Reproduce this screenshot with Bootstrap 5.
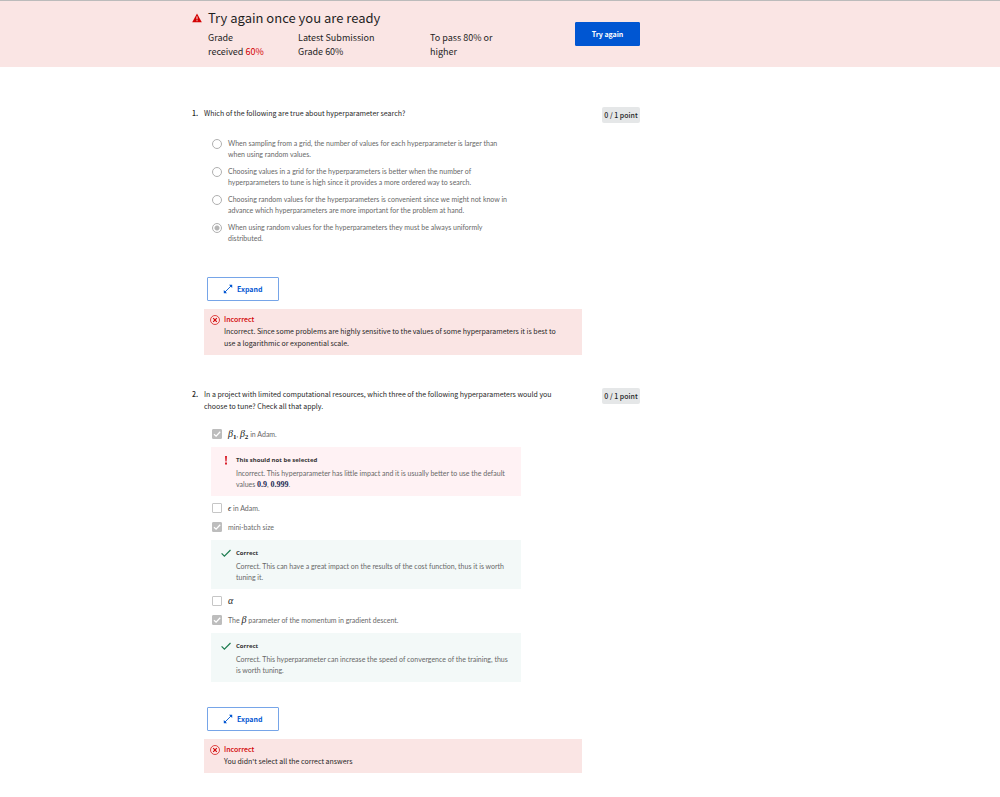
<!DOCTYPE html>
<html lang="en">
<head>
<meta charset="utf-8">
<meta name="viewport" content="width=device-width, initial-scale=1">
<title>Quiz results</title>
<link rel="stylesheet" href="https://cdn.jsdelivr.net/npm/bootstrap@5.3.0/dist/css/bootstrap.min.css">
<style>
  body { font: 7px/12px "Noto Sans CJK SC", "Noto Sans", sans-serif; color: #1f1f1f; background: #fff; }
  .page-col { max-width: 448px; margin-left: 19.2%; }
  .result-banner { background: #fae5e4; border-top: 1px solid #bbb; padding: 8px 0 0; }
  .result-title { font-size: 13px; line-height: 17px; font-weight: 400; margin: 0 0 5px; }
  .result-meta { font-size: 9px; line-height: 14px; padding-bottom: 8px; }
  .result-meta dl { margin: 0; }
  .result-meta dt, .result-meta dd { font-weight: 400; display: inline; margin: 0; }
  .meta-grade { width: 90px; padding-right: 30px; }
  .meta-latest { width: 132px; padding-right: 40px; }
  .meta-pass { width: 80px; }
  .score-fail { color: #d30001; }
  .warn-icon { width: 10px; height: 10px; margin: 4px 6px 0 0; }
  .btn-quiz { --bs-btn-font-size: 7px; --bs-btn-line-height: 12px; --bs-btn-font-weight: 700; --bs-btn-border-radius: 1px; --bs-btn-padding-x: 15px; --bs-btn-padding-y: 5px; }
  .btn-retry { --bs-btn-bg: #0056d2; --bs-btn-border-color: #0056d2; --bs-btn-color: #fff; margin-top: 13px; min-width: 65px; }
  .btn-expand { --bs-btn-color: #0056d2; --bs-btn-border-color: #76a5e8; margin: 0 0 8px 3px; min-width: 72px; }
  .btn-expand svg { width: 10px; height: 10px; margin-right: 4px; }
  .quiz { padding-top: 40px; }
  .question { margin-bottom: 33px; }
  .q-number { width: 12px; flex: none; font-weight: 500; }
  .q-main { width: 378px; }
  .q-text { margin: 0; font-size: 7px; line-height: 12px; font-weight: 400; max-width: 360px; }
  .points { background: #e5e7e8; border-radius: 2px; padding: 2px; font-weight: 500; white-space: nowrap; min-width: 38px; text-align: center; }
  .options { margin-left: 7px; width: 310px; font: 7px/11px Lato, sans-serif; color: #686868; }
  .radio-list { padding-top: 19px; padding-bottom: 33px; gap: 6px; }
  .check-list { padding-top: 16px; padding-bottom: 25px; }
  .option-box { appearance: none; flex: none; width: 10px; height: 10px; margin: 1px 6px 0 1px; border: 1px solid #b0b0b0; background: #fff; }
  .option-box[type=radio] { border-radius: 50%; }
  .option-box[type=radio]:checked { background: radial-gradient(circle, #b5b5b5 2px, #fff 3px); }
  .option-box[type=checkbox] { border-color: #c6c6c6; border-radius: 1px; }
  .option-box[type=checkbox]:checked { background: #bdbdbd url("data:image/svg+xml,%3Csvg xmlns='http://www.w3.org/2000/svg' viewBox='0 0 8 8'%3E%3Cpath d='M1 4.2 3.1 6.2 7.2 1.8' fill='none' stroke='white' stroke-width='1.3'/%3E%3C/svg%3E"); border-color: #bdbdbd; }
  .radio-list label { width: 286px; }
  .check-row { height: 12px; line-height: 12px; margin-top: 6px; }
  .check-row:first-child { margin-top: 0; }
  .check-row + .check-row { margin-top: 7px; }
  .sym { font: italic 400 10px/12px "Liberation Serif", serif; color: #222; }
  .sym sub { font: 700 7px/1 "Liberation Serif", serif; bottom: -2px; }
  .sym-num { font: 700 8px/11px "Liberation Serif", serif; color: #1d2c55; }
  .sym-light { font-size: 8px; }
  .note { margin-top: 7px; padding: 8px 8px 6px 10px; }
  .note svg { width: 10px; height: 10px; margin-right: 5px; flex: none; }
  .note h3 { font: 700 6px/11px "Open Sans", sans-serif; color: #333; margin: 0 0 2px; }
  .note p { margin: 0; }
  .note-bad { background: #fff2f4; }
  .note-good { background: #f3f9f8; }
  .verdict { background: #fae5e4; padding: 5px 12px 6px 6px; }
  .verdict svg { width: 10px; height: 10px; margin: 1px 4px 0 0; flex: none; }
  .verdict h3 { font-size: 7px; line-height: 11px; font-weight: 500; color: #d30001; margin: 0; }
  .verdict p { margin: 0; max-width: 342px; }
</style>
</head>
<body>
<header class="result-banner">
  <div class="page-col d-flex justify-content-between align-items-start">
    <div class="d-flex">
      <svg class="warn-icon" viewBox="0 0 10 10" aria-hidden="true"><path d="M5 .4 9.8 9.2H.2z" fill="#d30001"/><path d="M5 3.4v3M5 7.2v1" stroke="#fae5e4" stroke-width="1"/></svg>
      <div>
        <h1 class="result-title">Try again once you are ready</h1>
        <div class="result-meta d-flex">
          <dl class="meta-grade"><dt>Grade received</dt> <dd class="score-fail">60%</dd></dl>
          <dl class="meta-latest"><dt>Latest Submission Grade</dt> <dd>60%</dd></dl>
          <dl class="meta-pass"><dt>To pass</dt> <dd>80% or higher</dd></dl>
        </div>
      </div>
    </div>
    <button type="button" class="btn btn-quiz btn-retry">Try again</button>
  </div>
</header>

<main class="quiz">
  <section class="question page-col d-flex align-items-start">
    <span class="q-number">1.</span>
    <div class="q-main">
      <h2 class="q-text">Which of the following are true about hyperparameter search?</h2>
      <div class="options radio-list d-flex flex-column">
        <div class="d-flex"><input class="option-box" type="radio" name="q1" id="q1a" disabled><label for="q1a">When sampling from a grid, the number of values for each hyperparameter is larger than when using random values.</label></div>
        <div class="d-flex"><input class="option-box" type="radio" name="q1" id="q1b" disabled><label for="q1b">Choosing values in a grid for the hyperparameters is better when the number of<br>hyperparameters to tune is high since it provides a more ordered way to search.</label></div>
        <div class="d-flex"><input class="option-box" type="radio" name="q1" id="q1c" disabled><label for="q1c">Choosing random values for the hyperparameters is convenient since we might not know in advance which hyperparameters are more important for the problem at hand.</label></div>
        <div class="d-flex"><input class="option-box" type="radio" name="q1" id="q1d" checked disabled><label for="q1d">When using random values for the hyperparameters they must be always uniformly distributed.</label></div>
      </div>
      <button type="button" class="btn btn-quiz btn-expand d-flex align-items-center"><svg viewBox="0 0 10 10" aria-hidden="true"><path d="M1.5 8.5 8.5 1.5" stroke="currentColor" stroke-width=".9"/><path d="M6 .8h3.2V4zM.8 6v3.2H4z" fill="currentColor"/></svg>Expand</button>
      <div class="verdict d-flex">
        <svg viewBox="0 0 10 10" fill="none" stroke="#d30001" aria-hidden="true"><circle cx="5" cy="5" r="4.5" stroke-width=".7"/><path d="m3.2 3.2 3.6 3.6m0-3.6L3.2 6.8" stroke-width="1.1"/></svg>
        <div><h3>Incorrect</h3><p>Incorrect. Since some problems are highly sensitive to the values of some hyperparameters it is best to use a logarithmic or exponential scale.</p></div>
      </div>
    </div>
    <span class="points ms-auto">0 / 1 point</span>
  </section>

  <section class="question page-col d-flex align-items-start">
    <span class="q-number">2.</span>
    <div class="q-main">
      <h2 class="q-text">In a project with limited computational resources, which three of the following hyperparameters would you choose to tune? Check all that apply.</h2>
      <div class="options check-list">
        <div class="check-row d-flex"><input class="option-box" type="checkbox" id="q2a" checked disabled><label for="q2a"><span class="sym">β<sub>1</sub></span>, <span class="sym">β<sub>2</sub></span> in Adam.</label></div>
        <div class="note note-bad d-flex">
          <svg viewBox="0 0 10 10" aria-hidden="true"><path d="M4 1h2l-.4 5.5H4.4zM4 7.6h2v1.8H4z" fill="#d9202c"/></svg>
          <div><h3>This should not be selected</h3><p>Incorrect. This hyperparameter has little impact and it is usually better to use the default values <span class="sym-num">0.9</span>, <span class="sym-num">0.999</span>.</p></div>
        </div>
        <div class="check-row d-flex"><input class="option-box" type="checkbox" id="q2b" disabled><label for="q2b"><span class="sym sym-light">ϵ</span> in Adam.</label></div>
        <div class="check-row d-flex"><input class="option-box" type="checkbox" id="q2c" checked disabled><label for="q2c">mini-batch size</label></div>
        <div class="note note-good d-flex">
          <svg viewBox="0 0 10 10" fill="none" stroke="#1d7c50" stroke-width="1.2" aria-hidden="true"><path d="M.6 5.4 3.4 8.2 9.5 2"/></svg>
          <div><h3>Correct</h3><p>Correct. This can have a great impact on the results of the cost function, thus it is worth tuning it.</p></div>
        </div>
        <div class="check-row d-flex"><input class="option-box" type="checkbox" id="q2d" disabled><label for="q2d"><span class="sym">α</span></label></div>
        <div class="check-row d-flex"><input class="option-box" type="checkbox" id="q2e" checked disabled><label for="q2e">The <span class="sym">β</span> parameter of the momentum in gradient descent.</label></div>
        <div class="note note-good d-flex">
          <svg viewBox="0 0 10 10" fill="none" stroke="#1d7c50" stroke-width="1.2" aria-hidden="true"><path d="M.6 5.4 3.4 8.2 9.5 2"/></svg>
          <div><h3>Correct</h3><p>Correct. This hyperparameter can increase the speed of convergence of the training, thus is worth tuning.</p></div>
        </div>
      </div>
      <button type="button" class="btn btn-quiz btn-expand d-flex align-items-center"><svg viewBox="0 0 10 10" aria-hidden="true"><path d="M1.5 8.5 8.5 1.5" stroke="currentColor" stroke-width=".9"/><path d="M6 .8h3.2V4zM.8 6v3.2H4z" fill="currentColor"/></svg>Expand</button>
      <div class="verdict d-flex">
        <svg viewBox="0 0 10 10" fill="none" stroke="#d30001" aria-hidden="true"><circle cx="5" cy="5" r="4.5" stroke-width=".7"/><path d="m3.2 3.2 3.6 3.6m0-3.6L3.2 6.8" stroke-width="1.1"/></svg>
        <div><h3>Incorrect</h3><p>You didn't select all the correct answers</p></div>
      </div>
    </div>
    <span class="points ms-auto">0 / 1 point</span>
  </section>
</main>
<script src="https://cdn.jsdelivr.net/npm/bootstrap@5.3.0/dist/js/bootstrap.bundle.min.js"></script>
</body>
</html>
